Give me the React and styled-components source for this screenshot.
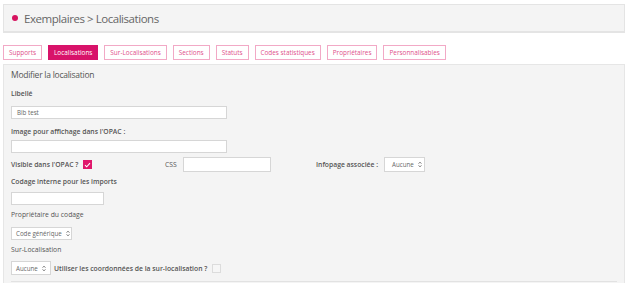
import React from "react";
import styled, { createGlobalStyle } from "styled-components";

const GlobalStyle = createGlobalStyle`
  body {
    margin: 0;
    background: #fff;
    font-family: "Open Sans", "Liberation Sans", sans-serif;
    color: #555;
  }
`;

const Page = styled.div`
  width: 630px;
  height: 283px;
  overflow: hidden;
  padding: 4px 5px 0 3px;
  box-sizing: border-box;
`;

const Header = styled.div`
  height: 29px;
  box-sizing: border-box;
  background: #f4f4f4;
  border: 1px solid #e4e4e4;
  border-bottom-width: 2px;
  display: flex;
  align-items: center;
  padding-left: 8px;
  gap: 6px;
`;

const Dot = styled.span`
  width: 6px;
  height: 6px;
  border-radius: 50%;
  background: #d6135f;
`;

const Title = styled.h1`
  margin: 0;
  font-size: 11.5px;
  letter-spacing: -0.45px;
  font-weight: 400;
  color: #666;
`;

const Tabs = styled.div`
  display: flex;
  gap: 6px;
  margin-top: 12px;
`;

const Tab = styled.div`
  height: 15px;
  box-sizing: border-box;
  padding: 0 5px;
  display: flex;
  align-items: center;
  font-size: 6.4px;
  border: 1px solid ${(p) => (p.$active ? "#d8136a" : "#f2a9c6")};
  background: ${(p) => (p.$active ? "#d8136a" : "#fff")};
  color: ${(p) => (p.$active ? "#fff" : "#e0508a")};
`;

const Panel = styled.div`
  margin-top: 4px;
  background: #f4f4f4;
  border: 1px solid #e6e6e6;
  padding: 0 7px 10px 7px;
  height: 240px;
  box-sizing: border-box;
`;

const PanelTitle = styled.div`
  height: 20px;
  line-height: 20px;
  font-size: 8.5px;
  letter-spacing: -0.25px;
  color: #555;
`;

const Label = styled.div`
  height: 10px;
  line-height: 10px;
  font-size: 6.8px;
  font-weight: ${(p) => (p.$regular ? 400 : 600)};
  color: #555;
  margin-top: ${(p) => p.$mt || 5}px;
  white-space: nowrap;
`;

const Input = styled.div`
  width: ${(p) => p.$w}px;
  height: ${(p) => p.$h || 13}px;
  box-sizing: border-box;
  background: #fff;
  border: 1px solid #d6d6d6;
  margin-top: ${(p) => p.$mt || 0}px;
  font-size: 6.2px;
  line-height: 11px;
  padding-left: 5px;
  color: #666;
  flex-shrink: 0;
`;

const Row = styled.div`
  display: flex;
  align-items: center;
  height: ${(p) => p.$h || 15}px;
  margin-top: ${(p) => p.$mt || 0}px;
`;

const Group = styled.div`
  display: flex;
  align-items: center;
  width: ${(p) => (p.$w ? `${p.$w}px` : "auto")};
  gap: ${(p) => p.$gap || 6}px;
  flex-shrink: 0;
`;

const InlineLabel = styled.span`
  font-size: 6.8px;
  font-weight: ${(p) => (p.$regular ? 400 : 600)};
  color: #555;
  white-space: nowrap;
`;

const SelectBox = styled.div`
  width: ${(p) => p.$w}px;
  height: ${(p) => p.$h || 15}px;
  box-sizing: border-box;
  background: #fff;
  border: 1px solid #d6d6d6;
  display: flex;
  align-items: center;
  gap: 4px;
  padding-left: ${(p) => p.$pl || 4}px;
  font-size: 6.2px;
  color: #666;
  white-space: nowrap;
  margin-top: ${(p) => p.$mt || 0}px;
  flex-shrink: 0;
`;

const CheckBox = styled.span`
  width: 9px;
  height: 9px;
  box-sizing: border-box;
  display: inline-flex;
  align-items: center;
  justify-content: center;
  background: ${(p) => (p.$checked ? "#e0186c" : "#f6f6f6")};
  border: 1px solid ${(p) => (p.$checked ? "#e0186c" : "#dcdcdc")};
`;

const Separator = styled.div`
  height: 1px;
  background: #e2e2e2;
  margin-top: 6px;
`;

const Arrows = () => (
  <svg width="4" height="7" viewBox="0 0 4 7">
    <path d="M0.5 2.8 L2 1 L3.5 2.8 M0.5 4.2 L2 6 L3.5 4.2" fill="none" stroke="#777" strokeWidth="0.8" />
  </svg>
);

const Check = () => (
  <svg width="7" height="6" viewBox="0 0 7 6">
    <path d="M1 3.2 L2.7 4.8 L6 1.2" fill="none" stroke="#fff" strokeWidth="1.1" />
  </svg>
);

const tabs = [
  "Supports",
  "Localisations",
  "Sur-Localisations",
  "Sections",
  "Statuts",
  "Codes statistiques",
  "Propriétaires",
  "Personnalisables",
];

const App = () => {
  return (
    <>
      <GlobalStyle />
      <Page>
        <Header>
          <Dot />
          <Title>Exemplaires &gt; Localisations</Title>
        </Header>
        <Tabs>
          {tabs.map((t) => (
            <Tab key={t} $active={t === "Localisations"}>
              {t}
            </Tab>
          ))}
        </Tabs>
        <Panel>
          <PanelTitle>Modifier la localisation</PanelTitle>
          <Label $mt={4}>Libellé</Label>
          <Input $w={216} $mt={7}>Bib test</Input>
          <Label $mt={8}>Image pour affichage dans l'OPAC :</Label>
          <Input $w={216} $mt={3} />
          <Row $mt={4}>
            <Group $w={154} $gap={5}>
              <InlineLabel>Visible dans l'OPAC ?</InlineLabel>
              <CheckBox $checked>
                <Check />
              </CheckBox>
            </Group>
            <Group $w={151}>
              <InlineLabel $regular>CSS</InlineLabel>
              <Input $w={88} $h={15} />
            </Group>
            <Group>
              <InlineLabel>Infopage associée :</InlineLabel>
              <SelectBox $w={41} $pl={7}>
                Aucune <Arrows />
              </SelectBox>
            </Group>
          </Row>
          <Label>Codage interne pour les imports</Label>
          <Input $w={93} $mt={5} />
          <Label $regular>Propriétaire du codage</Label>
          <SelectBox $w={61} $h={13} $mt={7}>
            Code générique <Arrows />
          </SelectBox>
          <Label $regular>Sur-Localisation</Label>
          <Row $mt={6} $h={14}>
            <Group $gap={3}>
              <SelectBox $w={40} $h={14}>
                Aucune <Arrows />
              </SelectBox>
              <InlineLabel>Utiliser les coordonnées de la sur-localisation ?</InlineLabel>
              <CheckBox style={{ marginLeft: 2 }} />
            </Group>
          </Row>
          <Separator />
        </Panel>
      </Page>
    </>
  );
};

export default App;
